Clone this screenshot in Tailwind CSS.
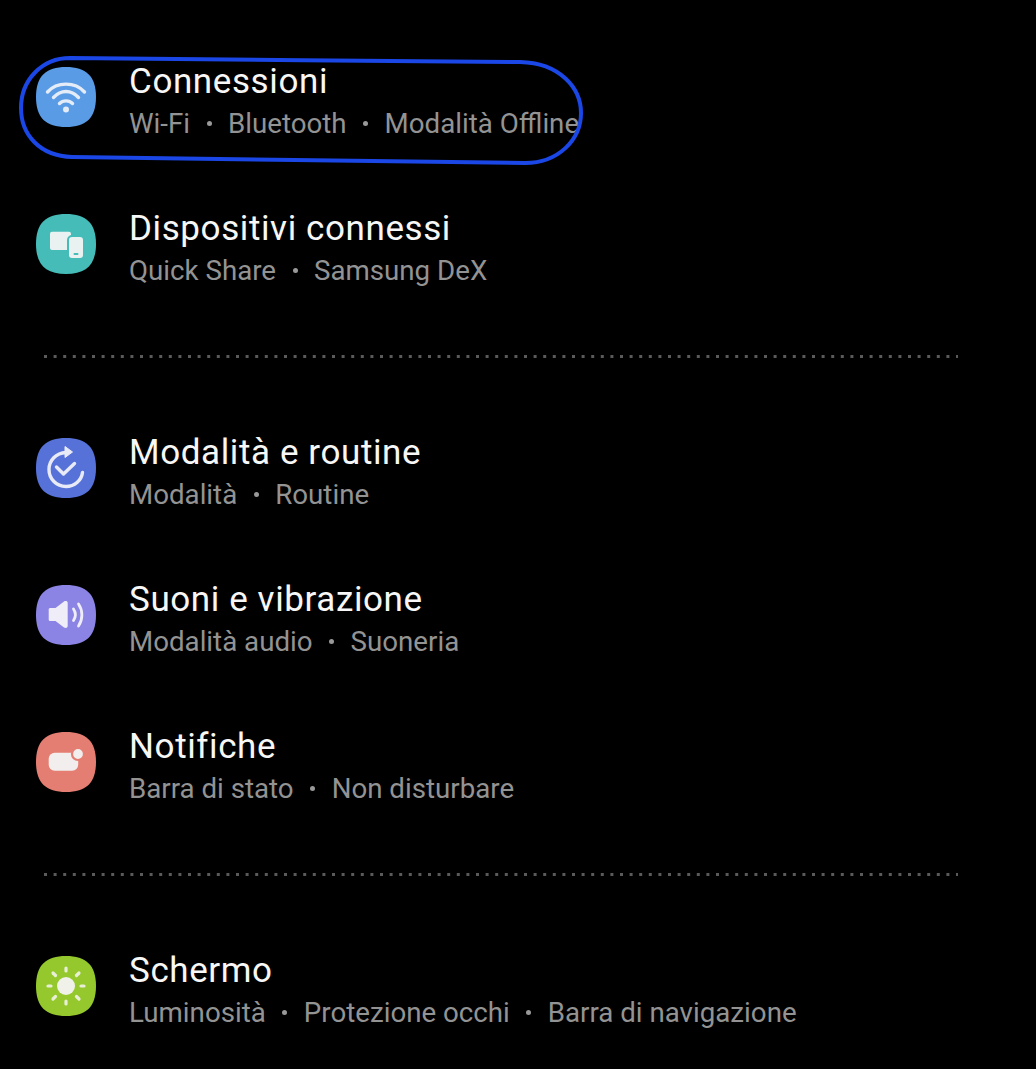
<!DOCTYPE html>
<html lang="en">
<head>
  <meta charset="UTF-8" />
  <title>Impostazioni</title>
  <script src="https://cdn.jsdelivr.net/npm/@tailwindcss/browser@4"></script>
</head>
<body class="bg-black font-['Roboto',sans-serif] w-[1036px] h-[1069px] overflow-hidden relative">
  <div class="pt-[24px]">

    <div class="h-[147px] flex items-center pl-[36px]">
      <svg class="w-[60px] h-[60px] shrink-0 -mt-[1px]" viewBox="0 0 60 60">
        <path d="M30 0C50 0 60 9 60 30S50 60 30 60 0 51 0 30 10 0 30 0Z" fill="#5a9be6"/>
        <g fill="none" stroke="#e3ecf7" stroke-width="3.400" stroke-linecap="round">
          <path d="M11.500 25C21 14.500 39 14.500 48.500 25"/>
          <path d="M17.500 30.500C25 22.500 35 22.500 42.500 30.500"/>
          <path d="M23.500 36.500C27 33 33 33 36.500 36.500"/>
        </g>
        <circle cx="30" cy="42.500" r="3" fill="#e3ecf7"/>
      </svg>
      <div class="ml-[33px] pt-[10px]">
        <div class="text-[35px] tracking-[0.6px] leading-[42px] text-[#f7f7f7]">Connessioni</div>
        <div class="flex items-center text-[27.7px] leading-[41px] text-[#939393]">
          <span>Wi-Fi</span><i class="w-[5px] h-[5px] rounded-full bg-[#999999] mx-[16.5px]"></i><span>Bluetooth</span><i class="w-[5px] h-[5px] rounded-full bg-[#999999] mx-[16.5px]"></i><span>Modalità Offline</span>
        </div>
      </div>
    </div>

    <div class="h-[147px] flex items-center pl-[36px]">
      <svg class="w-[60px] h-[60px] shrink-0 -mt-[1px]" viewBox="0 0 60 60">
        <path d="M30 0C50 0 60 9 60 30S50 60 30 60 0 51 0 30 10 0 30 0Z" fill="#45bcb8"/>
        <rect x="14" y="17.700" width="21" height="18.300" rx="2" fill="#e9f1f1"/>
        <rect x="32" y="22" width="16" height="23" rx="4" fill="#e9f1f1" stroke="#45bcb8" stroke-width="2"/>
        <rect x="37.500" y="39" width="5" height="2" rx="1" fill="#45bcb8"/>
      </svg>
      <div class="ml-[33px] pt-[10px]">
        <div class="text-[35px] tracking-[0.6px] leading-[42px] text-[#f7f7f7]">Dispositivi connessi</div>
        <div class="flex items-center text-[27.7px] leading-[41px] text-[#939393]">
          <span>Quick Share</span><i class="w-[5px] h-[5px] rounded-full bg-[#999999] mx-[16.5px]"></i><span>Samsung DeX</span>
        </div>
      </div>
    </div>

    <div class="h-[77px] flex items-center pl-[44px]">
      <svg class="w-[914px] h-[3px]" viewBox="0 0 914 3"><line x1="0" y1="1.500" x2="914" y2="1.500" stroke="#5a5a5a" stroke-width="3" stroke-dasharray="3 6.600"/></svg>
    </div>

    <div class="h-[147px] flex items-center pl-[36px]">
      <svg class="w-[60px] h-[60px] shrink-0 -mt-[1px]" viewBox="0 0 60 60">
        <path d="M30 0C50 0 60 9 60 30S50 60 30 60 0 51 0 30 10 0 30 0Z" fill="#5672d8"/>
        <g fill="none" stroke="#e8ebf7" stroke-width="3.400" stroke-linecap="round" stroke-linejoin="round">
          <path d="M30 14.500C20 15 13 22.500 13 31.500C13 41 20.500 48.500 30 48.500C38.500 48.500 45.500 42.500 46.500 34.500"/>
          <path d="M20.500 29L27.500 36L38.500 25.500"/>
        </g>
        <path d="M29 8.500L36.500 14L29 19.500Z" fill="#e8ebf7" stroke="#e8ebf7" stroke-width="1" stroke-linejoin="round"/>
      </svg>
      <div class="ml-[33px] pt-[10px]">
        <div class="text-[35px] tracking-[0.6px] leading-[42px] text-[#f7f7f7]">Modalità e routine</div>
        <div class="flex items-center text-[27.7px] leading-[41px] text-[#939393]">
          <span>Modalità</span><i class="w-[5px] h-[5px] rounded-full bg-[#999999] mx-[16.5px]"></i><span>Routine</span>
        </div>
      </div>
    </div>

    <div class="h-[147px] flex items-center pl-[36px]">
      <svg class="w-[60px] h-[60px] shrink-0 -mt-[1px]" viewBox="0 0 60 60">
        <path d="M30 0C50 0 60 9 60 30S50 60 30 60 0 51 0 30 10 0 30 0Z" fill="#8b84e4"/>
        <path d="M12.700 24.500C12.700 23.500 13.500 23 14.500 23H19.500L28 16.500C29.500 15.500 31.700 16 31.700 18V41C31.700 43 29.500 43.500 28 42.500L19.500 36H14.500C13.500 36 12.700 35.500 12.700 34.500Z" fill="#eeedf8"/>
        <g fill="none" stroke="#eeedf8" stroke-width="2.800" stroke-linecap="round">
          <path d="M37.500 24C39.800 27.500 39.800 32 37.500 35.500"/>
          <path d="M42.500 19C47 25.500 47 34.500 42.500 41"/>
        </g>
      </svg>
      <div class="ml-[33px] pt-[10px]">
        <div class="text-[35px] tracking-[0.6px] leading-[42px] text-[#f7f7f7]">Suoni e vibrazione</div>
        <div class="flex items-center text-[27.7px] leading-[41px] text-[#939393]">
          <span>Modalità audio</span><i class="w-[5px] h-[5px] rounded-full bg-[#999999] mx-[16.5px]"></i><span>Suoneria</span>
        </div>
      </div>
    </div>

    <div class="h-[147px] flex items-center pl-[36px]">
      <svg class="w-[60px] h-[60px] shrink-0 -mt-[1px]" viewBox="0 0 60 60">
        <path d="M30 0C50 0 60 9 60 30S50 60 30 60 0 51 0 30 10 0 30 0Z" fill="#e57e72"/>
        <rect x="12.700" y="20.700" width="29.500" height="18" rx="6" fill="#f1eeed"/>
        <circle cx="42" cy="22" r="6" fill="#f1eeed" stroke="#e57e72" stroke-width="2.200"/>
      </svg>
      <div class="ml-[33px] pt-[10px]">
        <div class="text-[35px] tracking-[0.6px] leading-[42px] text-[#f7f7f7]">Notifiche</div>
        <div class="flex items-center text-[27.7px] leading-[41px] text-[#939393]">
          <span>Barra di stato</span><i class="w-[5px] h-[5px] rounded-full bg-[#999999] mx-[16.5px]"></i><span>Non disturbare</span>
        </div>
      </div>
    </div>

    <div class="h-[77px] flex items-center pl-[44px]">
      <svg class="w-[914px] h-[3px]" viewBox="0 0 914 3"><line x1="0" y1="1.500" x2="914" y2="1.500" stroke="#5a5a5a" stroke-width="3" stroke-dasharray="3 6.600"/></svg>
    </div>

    <div class="h-[147px] flex items-center pl-[36px]">
      <svg class="w-[60px] h-[60px] shrink-0 -mt-[1px]" viewBox="0 0 60 60">
        <path d="M30 0C50 0 60 9 60 30S50 60 30 60 0 51 0 30 10 0 30 0Z" fill="#94c82d"/>
        <circle cx="30" cy="30" r="9" fill="#f0f2ea"/>
        <g stroke="#e8efd5" stroke-width="3.200" stroke-linecap="round">
          <path d="M30 12V15"/><path d="M30 45V48"/>
          <path d="M12 30H15"/><path d="M45 30H48"/>
          <path d="M17 17L19.500 19.500"/><path d="M40.500 40.500L43 43"/>
          <path d="M43 17L40.500 19.500"/><path d="M19.500 40.500L17 43"/>
        </g>
      </svg>
      <div class="ml-[33px] pt-[10px]">
        <div class="text-[35px] tracking-[0.6px] leading-[42px] text-[#f7f7f7]">Schermo</div>
        <div class="flex items-center text-[27.7px] leading-[41px] text-[#939393]">
          <span>Luminosità</span><i class="w-[5px] h-[5px] rounded-full bg-[#999999] mx-[16.5px]"></i><span>Protezione occhi</span><i class="w-[5px] h-[5px] rounded-full bg-[#999999] mx-[16.5px]"></i><span>Barra di navigazione</span>
        </div>
      </div>
    </div>

  </div>

  <!-- hand drawn circle around the first row -->
  <svg class="absolute left-0 top-0 w-[1036px] h-[1069px] pointer-events-none" viewBox="0 0 1036 1069">
    <path d="M70 58C180 58 400 62 520 62C560 63 581 88 581 113C581 140 558 163 525 163C400 162 200 158 72 157C40 156 21 135 21 108C21 80 42 58 70 58Z" fill="none" stroke="#1a47e6" stroke-width="4"/>
  </svg>
</body>
</html>
